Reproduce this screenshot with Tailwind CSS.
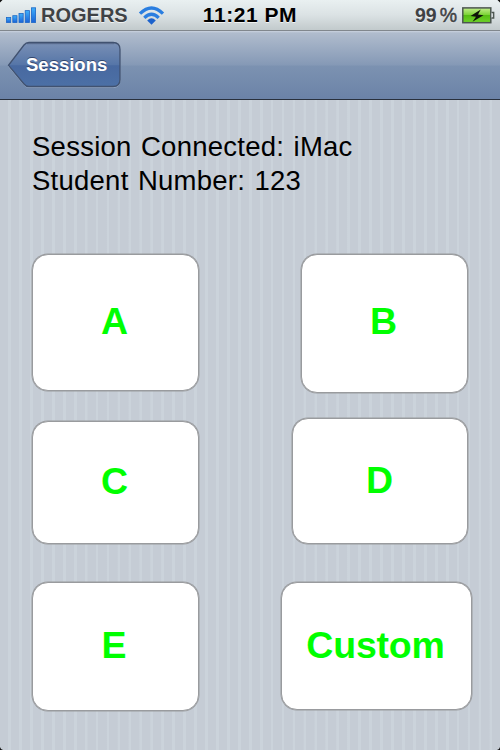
<!DOCTYPE html>
<html lang="en">
<head>
  <meta charset="UTF-8">
  <meta name="viewport" content="width=device-width, initial-scale=1.0">
  <title>Session</title>
  <script src="https://cdn.jsdelivr.net/npm/@tailwindcss/browser@4"></script>
</head>
<body class="bg-black">
  <div class="relative w-[500px] h-[750px] overflow-hidden flex flex-col font-['Liberation_Sans',Arial,sans-serif] bg-[#c5ccd4] bg-[repeating-linear-gradient(90deg,#c5ccd5_0px,#c5ccd5_8px,#cbd3db_8.4px,#cbd3db_10.9px,#c5ccd5_10.94px)]">

    <!-- Status bar -->
    <header class="relative h-[31px] shrink-0 flex items-center justify-between pl-[6px] pr-[5px] bg-linear-to-b from-[#e9f0f1] via-[#dbe2e4] to-[#c2cacc] border-b border-[#81878d] font-bold [text-shadow:0_1px_0_rgba(255,255,255,0.7)]">
      <div class="flex items-center">
        <svg class="w-[31px] h-[18px]" viewBox="0 0 31 18">
          <defs>
            <linearGradient id="blue" x1="0" y1="0" x2="0" y2="1">
              <stop offset="0" stop-color="#3fb0fa"/>
              <stop offset="1" stop-color="#1a62d8"/>
            </linearGradient>
          </defs>
          <g fill="url(#blue)" stroke="#1c67c6" stroke-width="0.8">
            <rect x="0.5" y="11.5" width="4.2" height="5"/>
            <rect x="6.8" y="9.7" width="4.2" height="6.8"/>
            <rect x="13" y="7.5" width="4.2" height="9"/>
            <rect x="19.2" y="4.6" width="4.2" height="11.9"/>
            <rect x="25.4" y="1.8" width="4.2" height="14.7"/>
          </g>
        </svg>
        <span class="ml-[4px] text-[20px] leading-[30px] text-[#3f4245]">ROGERS</span>
        <svg class="ml-[10px] w-[27px] h-[20px]" viewBox="0 0 27 20">
          <g fill="none" stroke="#2a7ee0" stroke-width="3.2">
            <path d="M2 8.7 Q13.500 -2.700 25 8.700"/>
            <path d="M6.300 12.800 Q13.500 5.700 20.700 12.800"/>
          </g>
          <path d="M9.200 15.400 Q13.500 11.300 17.800 15.400 L13.500 19.800 Z" fill="#1c62cc"/>
        </svg>
      </div>
      <div class="absolute left-0 w-full text-center text-[21px] leading-[30px] tracking-[0.55px] text-black">11:21 PM</div>
      <div class="flex items-center">
        <span class="text-[19.500px] leading-[30px] text-[#3f4245]">99</span>
        <span class="ml-[3px] text-[19.500px] leading-[30px] font-normal text-[#3f4245] [-webkit-text-stroke:0.5px_#3f4245]">%</span>
        <svg class="ml-[5px] w-[33px] h-[17px]" viewBox="0 0 33 17">
          <defs>
            <linearGradient id="green" x1="0" y1="0" x2="0" y2="1">
              <stop offset="0" stop-color="#c3ef8c"/>
              <stop offset="0.45" stop-color="#7fd43a"/>
              <stop offset="0.5" stop-color="#55bd12"/>
              <stop offset="1" stop-color="#6fd32a"/>
            </linearGradient>
          </defs>
          <rect x="0.8" y="0.900" width="28" height="14.800" fill="url(#green)" stroke="#4c5650" stroke-width="1.500"/>
          <path d="M29.500 5.500 h2.200 v5.500 h-2.200" fill="#d5dadd" stroke="#4c5650" stroke-width="1.300"/>
          <path d="M18.800 2.500 L8.500 9 L14 9.700 L10.500 14.700 L21.500 8.300 L16 7.500 Z" fill="#0d1408"/>
        </svg>
      </div>
    </header>

    <!-- Navigation bar -->
    <nav class="h-[69px] shrink-0 pt-[10px] pl-[7px] bg-[linear-gradient(#cbd3df_0px,#b0bccd_2px,#8599b6_34px,#7c92b1_35px,#6c83a8_67px)] border-b border-[#29303d]">
      <div class="relative w-[115px] h-[48px]">
        <svg class="w-[115px] h-[48px]" viewBox="0 0 115 48">
          <defs>
            <linearGradient id="back" x1="0" y1="0" x2="0" y2="1">
              <stop offset="0" stop-color="#7a90b5"/>
              <stop offset="0.5" stop-color="#5676a8"/>
              <stop offset="0.53" stop-color="#4869a0"/>
              <stop offset="1" stop-color="#4c70a6"/>
            </linearGradient>
          </defs>
          <path d="M22 2.500 H106 Q113 2.500 113 9.500 V39.500 Q113 46.500 106 46.500 H22 Q19 46.500 17 44 L1.500 25.500 L17 5 Q19 2.500 22 2.500 Z" fill="none" stroke="#a9b9d0" stroke-opacity="0.6"/>
          <path d="M22 1.500 H106 Q113 1.500 113 8.500 V38.500 Q113 45.500 106 45.500 H22 Q19 45.500 17 43 L1.500 24.300 L17 4 Q19 1.500 22 1.500 Z" fill="url(#back)" stroke="#415270" stroke-width="1.300"/>
          <path d="M20 2.700 H107" stroke="#3c4a66" stroke-opacity="0.45"/>
        </svg>
        <span class="absolute left-[19px] top-[12px] text-[18.500px] leading-[24px] font-bold text-white [text-shadow:0_-1px_0_rgba(30,45,80,0.7)]">Sessions</span>
      </div>
    </nav>

    <!-- Content -->
    <main class="flex-1 pl-[32px] pr-[32px]">
      <div class="mt-[30px] mb-[56px] text-[27.500px] leading-[34px] tracking-[0.25px] [word-spacing:1.500px] whitespace-nowrap text-black">
        <p>Session Connected: iMac</p>
        <p>Student Number: 123</p>
      </div>

      <div class="text-[37.500px] font-bold text-[#00ff00]">
        <div class="flex justify-between items-start h-[164px]">
          <div class="w-[167px] h-[137px] pb-[2px] pr-[2px] flex items-center justify-center rounded-[16px] bg-white border border-[#999b9e] shadow-[0_0_0_0.5px_#999b9e]">A</div>
          <div class="w-[167px] h-[139px] pb-[4px] pr-[2px] flex items-center justify-center rounded-[16px] bg-white border border-[#999b9e] shadow-[0_0_0_0.5px_#999b9e]">B</div>
        </div>
        <div class="flex justify-between items-end h-[126px]">
          <div class="w-[167px] h-[123px] pb-[2px] pr-[2px] flex items-center justify-center rounded-[16px] bg-white border border-[#999b9e] shadow-[0_0_0_0.5px_#999b9e]">C</div>
          <div class="w-[176px] h-[126px] pb-[2px] pr-[1px] flex items-center justify-center rounded-[16px] bg-white border border-[#999b9e] shadow-[0_0_0_0.5px_#999b9e]">D</div>
        </div>
        <div class="flex justify-between items-start mt-[38px]">
          <div class="w-[167px] h-[129px] pb-[2px] pr-[3px] flex items-center justify-center rounded-[16px] bg-white border border-[#999b9e] shadow-[0_0_0_0.5px_#999b9e]">E</div>
          <div class="w-[191px] h-[128px] -mr-[4px] pb-[1px] pr-[2px] flex items-center justify-center rounded-[16px] bg-white border border-[#999b9e] shadow-[0_0_0_0.5px_#999b9e] tracking-[-0.2px]">Custom</div>
        </div>
      </div>
    </main>

    <!-- Screen corners -->
    <svg class="absolute inset-0 w-[500px] h-[750px] pointer-events-none" viewBox="0 0 500 750">
      <path d="M0 0 H2.500 L0 2.500 Z M500 0 H497.500 L500 2.500 Z M0 750 V747 Q0.500 749.500 3 750 Z M500 750 V747 Q499.500 749.500 497 750 Z" fill="#111"/>
    </svg>
  </div>
</body>
</html>
